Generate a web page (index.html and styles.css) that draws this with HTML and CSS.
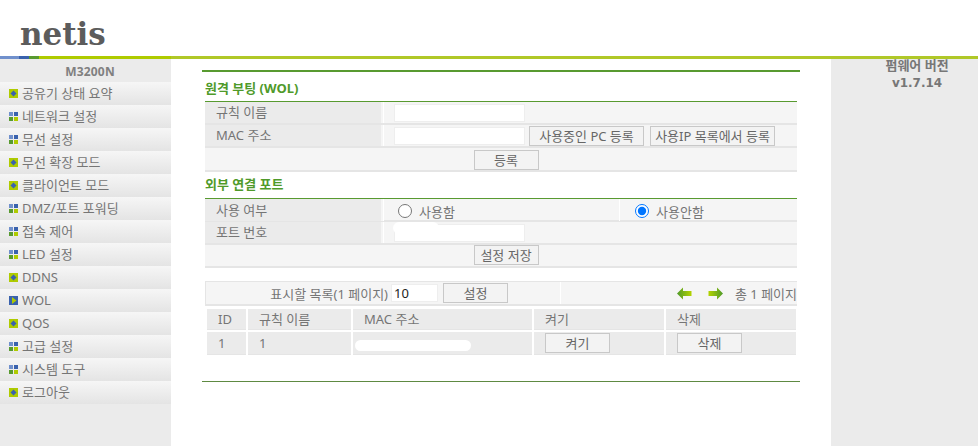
FILE: index.html
```html
<!DOCTYPE html>
<html>
	<head>
		<meta charset="utf-8" />
		<title>netis</title>
		<link rel="stylesheet" href="styles.css">
	</head>
	<body>
		<div id="top"><span class="logo">netis</span></div>
		<div id="bar"><i class="b1"></i><i class="b2"></i><i class="b3"></i><i class="b4"></i><i class="b5"></i></div>
		<div id="wrap">
			<div id="left">
				<div class="model">M3200N</div>
				<div class="item"><svg class="ico"><use href="#dot"/></svg>공유기 상태 요약</div>
				<div class="item"><svg class="ico"><use href="#grid"/></svg>네트워크 설정</div>
				<div class="item"><svg class="ico"><use href="#grid"/></svg>무선 설정</div>
				<div class="item"><svg class="ico"><use href="#dot"/></svg>무선 확장 모드</div>
				<div class="item"><svg class="ico"><use href="#dot"/></svg>클라이언트 모드</div>
				<div class="item"><svg class="ico"><use href="#grid"/></svg>DMZ/포트 포워딩</div>
				<div class="item"><svg class="ico"><use href="#grid"/></svg>접속 제어</div>
				<div class="item"><svg class="ico"><use href="#grid"/></svg>LED 설정</div>
				<div class="item"><svg class="ico"><use href="#dot"/></svg>DDNS</div>
				<div class="item"><svg class="ico"><use href="#play"/></svg>WOL</div>
				<div class="item"><svg class="ico"><use href="#dot"/></svg>QOS</div>
				<div class="item"><svg class="ico"><use href="#grid"/></svg>고급 설정</div>
				<div class="item"><svg class="ico"><use href="#grid"/></svg>시스템 도구</div>
				<div class="item"><svg class="ico"><use href="#dot"/></svg>로그아웃</div>
			</div>
			<div id="main">
				<div class="box">
					<div class="title">원격 부팅 (WOL)</div>
					<div class="form">
						<div class="row">
							<div class="lab">규칙 이름</div>
							<div class="val"><input type="text" class="txt"/></div>
						</div>
						<div class="row">
							<div class="lab">MAC 주소</div>
							<div class="val">
								<input type="text" class="txt"/>
								<button class="btn pc">사용중인 PC 등록</button>
								<button class="btn ip">사용IP 목록에서 등록</button>
							</div>
						</div>
						<div class="row act"><button class="btn">등록</button></div>
					</div>
					<div class="title second">외부 연결 포트</div>
					<div class="form">
						<div class="row three">
							<div class="lab">사용 여부</div>
							<label class="val"><input type="radio" name="port"/>사용함</label>
							<label class="val"><input type="radio" name="port" checked="checked"/>사용안함</label>
						</div>
						<div class="row">
							<div class="lab">포트 번호</div>
							<div class="val"><input type="text" class="txt"/><span class="blot port"></span></div>
						</div>
						<div class="row act short"><button class="btn">설정 저장</button></div>
					</div>
					<div class="pager">
						<div class="show">표시할 목록(1 페이지)<input type="text" class="num" value="10"/><button class="btn">설정</button></div>
						<div class="pages">
							<svg class="arrow" viewBox="0 0 15 13"><use href="#prev"/></svg>
							<svg class="arrow" viewBox="0 0 15 13"><use href="#next"/></svg>
							<span>총 1 페이지</span>
						</div>
					</div>
					<div class="list">
						<div>ID</div><div>규칙 이름</div><div>MAC 주소</div><div>켜기</div><div>삭제</div>
						<div class="tall">1</div><div class="tall">1</div><div class="tall"><span class="blot mac"></span></div>
						<div class="tall"><button class="btn">켜기</button></div><div class="tall"><button class="btn">삭제</button></div>
					</div>
				</div>
			</div>
			<div id="right">
				<div class="fw">펌웨어 버전</div>
				<div class="ver">v1.7.14</div>
			</div>
		</div>
		<svg width="0" height="0" class="defs">
			<defs>
				<linearGradient id="prevfill" x1="0" x2="1" y1="0" y2="0">
					<stop offset="0" stop-color="#4f9a2a"/>
					<stop offset="1" stop-color="#b4d300"/>
				</linearGradient>
				<linearGradient id="nextfill" x1="0" x2="1" y1="0" y2="0">
					<stop offset="0" stop-color="#b4d300"/>
					<stop offset="1" stop-color="#4f9a2a"/>
				</linearGradient>
				<g id="dot">
					<rect width="9" height="9" fill="#afcb00"/>
					<path d="M4.5 1.500 7.500 4.500 4.500 7.500 1.500 4.500Z" fill="#3a62ad"/>
				</g>
				<g id="grid">
					<rect width="4" height="4" fill="#7090cc"/>
					<rect x="5" width="4" height="4" fill="#3a62ad"/>
					<rect y="5" width="4" height="4" fill="#589a30"/>
					<rect x="5" y="5" width="4" height="4" fill="#afcb00"/>
				</g>
				<g id="play">
					<rect width="9" height="9" fill="#3a62ad"/>
					<path d="M3 1 7.500 4.500 3 8Z" fill="#afcb00"/>
				</g>
				<path id="prev" d="M0 6.500 6 .5V4H14.500V9H6V12.500Z" fill="url(#prevfill)"/>
				<path id="next" d="M15 6.500 9 .5V4H.5V9H9V12.500Z" fill="url(#nextfill)"/>
			</defs>
		</svg>
	</body>
</html>
```

FILE: styles.css
```css
*{margin:0;padding:0;box-sizing:border-box}
html,body{height:100%;overflow:hidden}
body{font-family:"Noto Sans","Noto Sans CJK KR",sans-serif;font-size:13px;color:#757575;background:#fff;display:flex;flex-direction:column;}
.defs{position:absolute;}

#top{height:56px;padding:15px 0 0 20px;flex:none;}
.logo{font-family:"DejaVu Serif",serif;font-weight:bold;font-size:31px;line-height:38px;color:#5c5c5c;display:block;}
#bar{height:3px;display:flex;flex:none;}
#bar i{display:block;height:3px;}
#bar .b1{width:19px;background:#7090cc;}
#bar .b2{width:10px;background:#3a62ad;}
#bar .b3{width:10px;background:#589a30;}
#bar .b4{width:132px;background:#afcb00;}
#bar .b5{flex:1;background:#b0c828;}

#wrap{flex:1;display:flex;min-height:0;}
#left{width:171px;background:#ebebeb;flex:none;}
.model{height:23px;line-height:25px;text-align:center;font-weight:bold;font-size:12px;letter-spacing:.2px;color:#808080;padding-left:9px;}
.item{height:23px;padding:0 0 2px 9px;display:flex;align-items:center;background:linear-gradient(#f6f6f6,#e4e4e4);}
.ico{width:9px;height:9px;margin:2px 4px 0 0;flex:none;}

#main{flex:1;padding:11px 31px 0;}
.box{border-top:2px solid #589a30;border-bottom:1px solid #5e8a42;height:312px;padding:0 3px;}
.title{color:#4f9a2a;font-weight:bold;font-size:13px;line-height:18px;padding-top:7px;height:30px;border-bottom:1px solid #589a30;}
.title.second{height:27px;padding-top:3px;}
.form .row{display:grid;grid-template-columns:178px 1fr;background:#f5f5f5;border-bottom:2px solid #e5e5e5;height:23px;}
.form .row.three{grid-template-columns:178px 236px 1fr;}
.form .row.act{display:flex;justify-content:center;align-items:flex-end;height:24px;padding-left:10px;}
.form .row.act.short{height:23px;align-items:flex-start;}
.lab{background:#ebebeb;padding-left:11px;line-height:20px;border-right:2px solid #f5f5f5;}
.val{padding-left:10px;display:flex;align-items:center;position:relative;border-left:1px solid #fff;}
.three .lab{line-height:22px;}
.three .val{padding:2px 0 0 14px;}
.three .val+.val{padding-left:15px;}
.three input{width:14px;height:14px;margin:-1px 7px 0 0;accent-color:#0075ff;}
.txt{width:131px;height:18px;border:1px solid #eee;background:#fff;outline:none;}
.btn{width:65px;height:20px;border:1px solid #c8c8c8;background:#f3f3f3;color:#666;font:inherit;line-height:16px;}
.btn.pc{width:115px;margin-left:4px;align-self:flex-end;}
.btn.ip{width:125px;margin-left:6px;align-self:flex-end;}

.blot{position:absolute;display:block;background:#fff;border-radius:7px;}
.blot.port{left:9px;top:0;width:46px;height:12px;}
.blot.mac{left:2px;top:8px;width:116px;height:11px;}

.pager{margin-top:13px;height:25px;background:#f5f5f5;border:1px solid #e5e5e5;border-width:1px 0 2px 1px;display:flex;}
.show{width:355px;display:flex;align-items:center;justify-content:flex-end;border-right:1px solid #fff;padding-right:52px;}
.num{width:47px;height:18px;border:1px solid #eee;background:#fff;margin:0 5px 0 3px;padding-left:2px;font:inherit;color:#222;outline:none;}
.pages{flex:1;display:flex;align-items:center;padding-left:116px;white-space:nowrap;}
.arrow{width:15px;height:13px;margin-right:16px;flex:none;}
.arrow+.arrow{margin-right:12px;}

.list{display:grid;grid-template-columns:39px 103px 179px 130px 130px;gap:2px;margin:3px 0 0 2px;}
.list div{height:21px;background:#ebebeb;line-height:21px;padding-left:11px;border-bottom:1px solid #e5e5e5;position:relative;}
.list div.tall{height:23px;line-height:22px;}
.list .btn{margin-top:1px;display:block;}

#right{width:147px;flex:none;background:#ebebeb;text-align:center;padding-left:25px;font-weight:bold;color:#777;}
.fw{line-height:12px;font-size:13px;white-space:nowrap;}
.ver{font-family:"DejaVu Sans",sans-serif;font-size:12px;line-height:24px;}
```
